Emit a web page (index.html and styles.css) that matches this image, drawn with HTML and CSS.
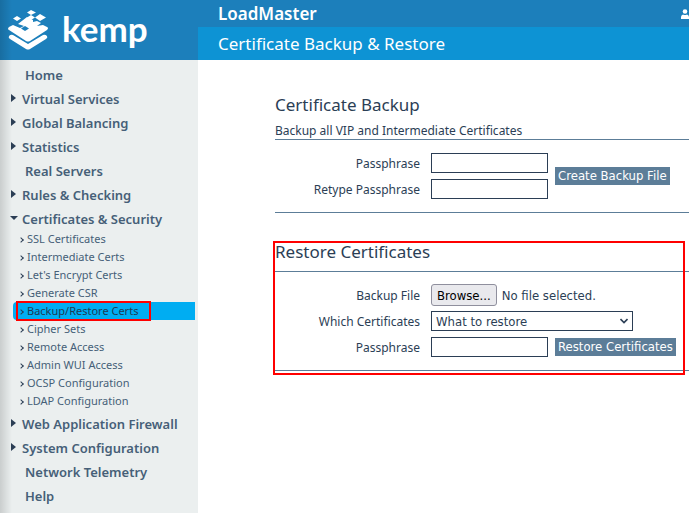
FILE: index.html
```html
<!DOCTYPE html>
<html lang="en">
  <head>
    <meta charset="UTF-8" />
    <meta name="viewport" content="width=device-width, initial-scale=1.0" />
    <title>LoadMaster - Certificate Backup &amp; Restore</title>
    <link rel="stylesheet" href="styles.css">

    <script>
      function chooseFile() {
        document.getElementById("backup-file").click();
      }

      function showFileName(input) {
        document.getElementById("file-name").textContent = input.files.length
          ? input.files[0].name
          : "No file selected.";
      }
    </script>
  </head>
  <body>
    <aside class="sidebar">
      <a class="logo" href="#">
        <svg class="logo-mark" viewBox="0 0 40 40" width="40" height="40" aria-hidden="true">
          <g fill="#fff">
            <path d="M23 0l5 2.500-5 2.500-4-2.500zM32 4l6 3.500-6 3.500-5-3.500zM23 5l4 2.500-4 2.500-4-2.500zM9 6l4 2.500-4 2.500-4-2.500z" />
            <path d="M19 7l6 3v2l4-1 4 2-4 3 6-1 4 2q2 1 0 3L22 31q-2 1-4 0L1 20q-2-1 0-3l4-2 7 3 4-2-6-2z" />
            <path d="M1 26q2-2 4-1l15 9 15-9q2-1 4 1 1 2-1 3L22 39q-2 1-4 0L2 29q-2-1-1-3z" />
          </g>
          <path d="M17 16l4 2.500-4 2.500-4-2.500z" fill="#1c7fbb" />
        </svg>
        <span class="logo-text">kemp</span>
      </a>

      <nav>
        <ul class="menu">
          <li><a class="plain" href="#">Home</a></li>
          <li><a class="closed" href="#">Virtual Services</a></li>
          <li><a class="closed" href="#">Global Balancing</a></li>
          <li><a class="closed" href="#">Statistics</a></li>
          <li><a class="plain" href="#">Real Servers</a></li>
          <li><a class="closed" href="#">Rules &amp; Checking</a></li>
          <li>
            <a class="open" href="#">Certificates &amp; Security</a>
            <ul class="submenu">
              <li><a href="#">SSL Certificates</a></li>
              <li><a href="#">Intermediate Certs</a></li>
              <li><a href="#">Let's Encrypt Certs</a></li>
              <li><a href="#">Generate CSR</a></li>
              <li class="active"><a href="#">Backup/Restore Certs</a></li>
              <li><a href="#">Cipher Sets</a></li>
              <li><a href="#">Remote Access</a></li>
              <li><a href="#">Admin WUI Access</a></li>
              <li><a href="#">OCSP Configuration</a></li>
              <li><a href="#">LDAP Configuration</a></li>
            </ul>
          </li>
          <li><a class="closed" href="#">Web Application Firewall</a></li>
          <li><a class="closed" href="#">System Configuration</a></li>
          <li><a class="plain" href="#">Network Telemetry</a></li>
          <li><a class="plain" href="#">Help</a></li>
        </ul>
      </nav>
    </aside>

    <div class="page">
      <header>
        <div class="product">
          <span>LoadMaster</span>
          <svg viewBox="0 0 8 10" width="8" height="10" aria-hidden="true">
            <circle cx="4" cy="2.500" r="2.300" fill="#fff" />
            <path d="M0 10V8q0-2 2-2.500Q4 6.500 6 5.500 8 6 8 8v2z" fill="#fff" />
          </svg>
        </div>
        <h1>Certificate Backup &amp; Restore</h1>
      </header>

      <main>
        <section>
          <h2>Certificate Backup</h2>
          <p class="intro">Backup all VIP and Intermediate Certificates</p>
          <form class="fields">
            <label for="pass">Passphrase</label>
            <input class="text" id="pass" type="password" />
            <label for="repass">Retype Passphrase</label>
            <input class="text" id="repass" type="password" />
            <button class="action both-rows" type="button">Create Backup File</button>
          </form>
        </section>

        <section class="restore">
          <h2>Restore Certificates</h2>
          <form class="fields">
            <label for="backup-file">Backup File</label>
            <div class="file wide">
              <input id="backup-file" type="file" hidden onchange="showFileName(this)" />
              <button class="browse" type="button" onclick="chooseFile()">Browse...</button>
              <span id="file-name">No file selected.</span>
            </div>
            <label for="which">Which Certificates</label>
            <div class="select wide">
              <select id="which">
                <option>What to restore</option>
              </select>
              <svg viewBox="0 0 8 6" width="8" height="6" aria-hidden="true">
                <path d="M0.500 1L4 4.500 7.500 1" fill="none" stroke="#2b3e55" stroke-width="1.600" />
              </svg>
            </div>
            <label for="restore-pass">Passphrase</label>
            <input class="text" id="restore-pass" type="password" />
            <button class="action" type="button">Restore Certificates</button>
          </form>
        </section>
      </main>
    </div>
  </body>
</html>
```

FILE: styles.css
```css
*,
*::before,
*::after {
  box-sizing: border-box;
}

body {
  margin: 0;
  display: flex;
  min-height: 100vh;
  overflow: hidden;
  background: #fff;
  color: #2b3e55;
  font-family: "Noto Sans", sans-serif;
  font-size: 12px;
}

a {
  color: inherit;
  text-decoration: none;
}

ul {
  list-style: none;
  margin: 0;
  padding: 0;
}

/* sidebar */

.sidebar {
  position: relative;
  flex: 0 0 198px;
  background: #ebefef;
}

.sidebar::after {
  content: "";
  position: absolute;
  top: 0;
  bottom: 0;
  left: 0;
  width: 12px;
  background: linear-gradient(to right, rgba(0, 0, 0, 0.14), transparent);
  pointer-events: none;
}

.logo {
  display: flex;
  align-items: center;
  gap: 14px;
  height: 60px;
  padding-left: 8px;
  background: #1c7fbb;
  color: #fff;
}

.logo-text {
  padding-bottom: 4px;
  font-family: "Lato", sans-serif;
  font-size: 35px;
  font-weight: 700;
  line-height: 40px;
}

.menu {
  padding-top: 3px;
  color: #465f78;
}

.menu > li > a {
  display: flex;
  align-items: center;
  height: 24px;
  padding-left: 10px;
  font-size: 13px;
  font-weight: 600;
}

.menu > li > a.plain {
  padding-left: 25px;
}

.closed::before,
.open::before {
  content: "";
  width: 0;
  border: 4px solid transparent;
}

.closed::before {
  border-left: 5px solid #2b3e55;
  border-right: 0;
  margin: 0 6px 2px 1px;
}

.open::before {
  border-top: 4px solid #2b3e55;
  border-bottom: 0;
  margin: 0 4px 2px 0;
}

.submenu {
  margin-top: -1px;
  padding: 0 3px 2px 13px;
}

.submenu li {
  position: relative;
  display: flex;
  align-items: center;
  height: 18px;
  padding: 0 0 2px 6px;
  font-size: 11px;
}

.submenu li::before {
  content: "";
  width: 4px;
  height: 4px;
  margin: 3px 4px 0 0;
  border: solid #2b3e55;
  border-width: 1px 1px 0 0;
  transform: rotate(45deg);
}

.submenu .active {
  border-radius: 4px 0 0 4px;
  background: #00adf2;
  color: #1f3b54;
}

.submenu .active::after {
  content: "";
  position: absolute;
  top: -1px;
  bottom: -1px;
  left: 3px;
  width: 135px;
  border: 2px solid #f00;
}

/* page */

.page {
  flex: 1;
  min-width: 0;
}

header {
  color: #fff;
}

.product {
  display: flex;
  align-items: center;
  justify-content: space-between;
  height: 27px;
  padding-left: 20px;
  background: #1c7fbb;
  font-size: 17px;
  font-weight: 600;
}

h1 {
  height: 33px;
  margin: 0;
  padding-left: 20px;
  background: #0d93d4;
  font-size: 17px;
  font-weight: 400;
  line-height: 33px;
}

main {
  padding: 33px 0 0 77px;
}

section {
  position: relative;
}

h2 {
  margin: 0;
  font-size: 17px;
  font-weight: 400;
  line-height: 24px;
}

.intro {
  margin: 6px 0 0;
  line-height: 16px;
}

.fields {
  display: grid;
  grid-template-columns: 149px 117px 1fr;
  grid-auto-rows: 20px;
  align-items: center;
  gap: 6px 7px;
  padding: 13px 0;
  border: solid #5c7d98;
  border-width: 1px 0;
}

.fields label {
  padding-right: 4px;
  text-align: right;
}

.text,
select {
  width: 100%;
  height: 20px;
  margin: 0;
  border: 1px solid #2b3e55;
  border-radius: 0;
  background: #fff;
  color: #2b3e55;
}

.wide {
  grid-column: 2 / 4;
}

.both-rows {
  grid-area: 1 / 3 / 3 / 4;
}

.action {
  justify-self: start;
  height: 18px;
  padding: 0 3px;
  border: 0;
  background: #5c7d98;
  color: #fff;
  font-family: "DejaVu Sans Condensed", "Noto Sans", sans-serif;
  font-size: 13px;
  line-height: 18px;
}

.file {
  display: flex;
  align-items: center;
  gap: 5px;
  font-family: "DejaVu Sans Condensed", "Noto Sans", sans-serif;
  font-size: 13px;
}

.browse {
  height: 22px;
  padding: 0 5px;
  border: 1px solid #8f8f9d;
  border-radius: 3px;
  background: #e9e9ed;
  color: #000;
  font: inherit;
}

.select {
  position: relative;
  width: 202px;
}

.select select {
  display: block;
  appearance: none;
  padding: 0 4px;
  font-family: "DejaVu Sans Condensed", "Noto Sans", sans-serif;
  font-size: 13px;
}

.select svg {
  position: absolute;
  top: 7px;
  right: 5px;
  pointer-events: none;
}

.restore {
  margin-top: 27px;
}

.restore h2 {
  padding-bottom: 7px;
}

.restore::after {
  content: "";
  position: absolute;
  top: 1px;
  right: 4px;
  bottom: -4px;
  left: -2px;
  border: 2px solid #f00;
  pointer-events: none;
}
```
